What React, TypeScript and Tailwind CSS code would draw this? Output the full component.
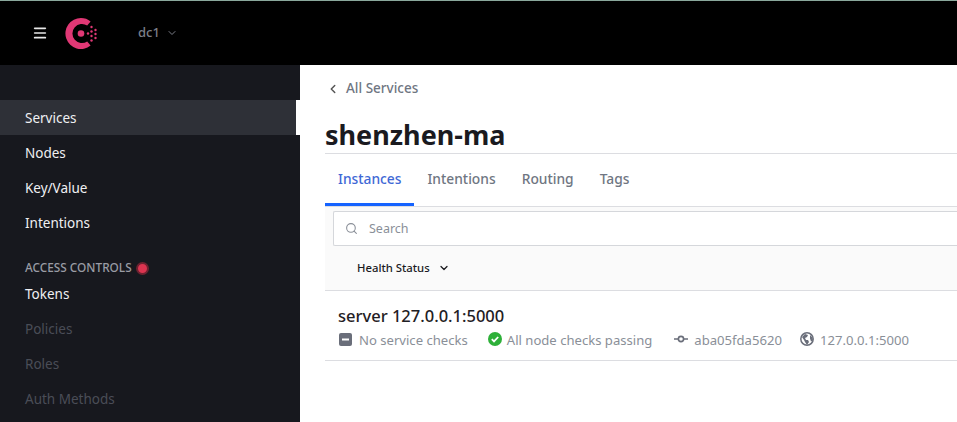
import { ChevronDown, ChevronLeft, Menu, Search } from 'lucide-react';

const font = { fontFamily: '"Noto Sans", sans-serif' };

function ConsulLogo() {
  return (
    <svg width="33" height="33" viewBox="0 0 33 33" fill="#e03875">
      <path d="M16 1a15.5 15.5 0 0 1 9.6 3.4l-3.4 4.2a9.5 9.5 0 1 0 0 15.8l3.4 4.2A15.5 15.5 0 1 1 16 1z" />
      <circle cx="16" cy="16.5" r="3.3" />
      <circle cx="23" cy="16.5" r="1.2" />
      <circle cx="26.5" cy="10" r="1.2" />
      <circle cx="30.5" cy="13" r="1.2" />
      <circle cx="26.5" cy="14.5" r="1.2" />
      <circle cx="30.5" cy="17" r="1.2" />
      <circle cx="26.5" cy="19" r="1.2" />
      <circle cx="30.5" cy="21" r="1.2" />
      <circle cx="26.5" cy="23.5" r="1.2" />
    </svg>
  );
}

function NavItem({ label, active, disabled }: { label: string; active?: boolean; disabled?: boolean }) {
  return (
    <div
      className={`h-[35px] pt-[2px] flex items-center pl-[25px] text-[13.5px] ${
        active ? 'bg-[#2e3037] border-r-4 border-white' : ''
      } ${disabled ? 'text-[#4a4d57]' : 'text-[#f0f0f3]'}`}
    >
      {label}
    </div>
  );
}

function Tab({ label, active }: { label: string; active?: boolean }) {
  return (
    <div
      className={`h-[52px] px-[13px] pt-[2px] flex items-center border-b-[3px] text-[13.8px] font-medium ${
        active ? 'border-[#1563ff] text-[#3f69d6]' : 'border-transparent text-[#6f7682]'
      }`}
    >
      {label}
    </div>
  );
}

export default function App() {
  return (
    <div className="w-[957px] h-[422px] overflow-hidden bg-white flex flex-col" style={font}>
      <header className="h-[65px] shrink-0 bg-black border-t border-[#8aa89c] flex items-center">
        <Menu className="ml-[32px] text-[#e8e8e8]" size={16} strokeWidth={2.5} />
        <div className="ml-[17px] flex items-center">
          <ConsulLogo />
        </div>
        <div className="ml-[40px] flex items-center text-[13px] font-medium text-[#7b7e88]">
          dc1
          <ChevronDown className="ml-[6px]" size={12} strokeWidth={2} />
        </div>
      </header>
      <div className="flex flex-1 min-h-0">
        <aside className="w-[300px] shrink-0 bg-[#17181e] pt-[35px]">
          <NavItem label="Services" active />
          <NavItem label="Nodes" />
          <NavItem label="Key/Value" />
          <NavItem label="Intentions" />
          <div className="mt-[18px] h-[18px] pt-[2px] flex items-center pl-[25px] text-[11.8px] font-medium text-[#9a9ca5]">
            ACCESS CONTROLS
            <span className="ml-[4px] w-[13px] h-[13px] rounded-full bg-[#dc3450] border-2 border-[#6d2230]" />
          </div>
          <NavItem label="Tokens" />
          <NavItem label="Policies" disabled />
          <NavItem label="Roles" disabled />
          <NavItem label="Auth Methods" disabled />
        </aside>
        <main className="flex-1 min-w-0 pl-[25px]">
          <div className="h-[47px] flex items-center text-[13.5px] font-medium text-[#6f7682]">
            <ChevronLeft className="ml-[1px] mr-[6px] text-[#555]" size={14} strokeWidth={2.5} />
            All Services
          </div>
          <h1 className="h-[42px] border-b border-[#dcdde1] text-[27px] leading-[46px] font-bold text-[#1a1a1f]">
            shenzhen-ma
          </h1>
          <div className="flex border-b border-[#dcdde1] h-[53px]">
            <Tab label="Instances" active />
            <Tab label="Intentions" />
            <Tab label="Routing" />
            <Tab label="Tags" />
          </div>
          <div className="bg-[#fafafa] h-[84px] border-b border-[#dcdde1] pl-[8px] pt-[4px]">
            <div className="h-[35px] bg-white border border-[#d5d7db] border-r-0 rounded-l-[2px] flex items-center pl-[11px] text-[12.5px] text-[#8a8f98]">
              <Search size={13} strokeWidth={2} className="text-[#8a8f98]" />
              <span className="ml-[11px] pt-[2px]">Search</span>
            </div>
            <div className="h-[44px] flex items-center pl-[24px] text-[11.3px] font-medium text-[#1a1a1f]">
              Health Status
              <ChevronDown className="ml-[8px]" size={12} strokeWidth={2.5} />
            </div>
          </div>
          <div className="h-[70px] border-b border-[#dcdde1] pl-[13px] pt-[13px]">
            <div className="text-[16.5px] leading-[24px] font-medium text-[#1f2024]">server 127.0.0.1:5000</div>
            <div className="mt-[1px] flex items-center text-[13.1px] leading-[22px] text-[#8a8f98]">
              <svg width="14" height="14" viewBox="0 0 14 14" className="mr-[7px] mb-[2px]">
                <rect x="1" y="1" width="13" height="13" rx="2" fill="#6a6e7a" />
                <rect x="4" y="6.5" width="7" height="2" fill="#fff" />
              </svg>
              No service checks
              <svg width="14" height="14" viewBox="0 0 14 14" className="ml-[20px] mr-[5px] mb-[3px]">
                <circle cx="7" cy="7" r="7" fill="#2eb039" />
                <path d="M3.8 7.2l2.2 2.2 4.2-4.4" fill="none" stroke="#fff" strokeWidth="1.8" />
              </svg>
              All node checks passing
              <svg width="14" height="8" viewBox="0 0 14 8" className="ml-[22px] mr-[6px] mb-[3px]">
                <circle cx="7" cy="4" r="2.6" fill="none" stroke="#6a6e7a" strokeWidth="1.6" />
                <path d="M0 4h4M10 4h4" stroke="#6a6e7a" strokeWidth="1.6" />
              </svg>
              aba05fda5620
              <svg width="14" height="14" viewBox="0 0 14 14" className="ml-[18px] mr-[6px] mb-[3px]">
                <circle cx="7" cy="7" r="6.2" fill="#fff" stroke="#6a6e7a" strokeWidth="1.5" />
                <path d="M2 5l3-3 3 1-1 2-2 1 1 2 2 0 1 2-2 3-2-3-1-2zM10 3l2.5 2.5.5 3-2 1-1-3z" fill="#6a6e7a" />
              </svg>
              127.0.0.1:5000
            </div>
          </div>
        </main>
      </div>
    </div>
  );
}
